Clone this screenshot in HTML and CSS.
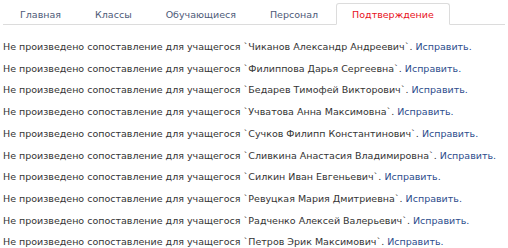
FILE: index.html
```html
<!DOCTYPE html>
<html lang="ru">
<head>
    <meta charset="UTF-8">
    <title>Подтверждение</title>
    <link rel="stylesheet" href="styles.css">
</head>
<body>
    <ul class="tabs">
        <li class="tab"><a href="#">Главная</a></li>
        <li class="tab"><a href="#">Классы</a></li>
        <li class="tab"><a href="#">Обучающиеся</a></li>
        <li class="tab"><a href="#">Персонал</a></li>
        <li class="tab active"><a href="#">Подтверждение</a></li>
    </ul>

    <div class="messages">
        <p class="msg">Не произведено сопоставление для учащегося `Чиканов Александр Андреевич`. <a href="#">Исправить.</a></p>
        <p class="msg">Не произведено сопоставление для учащегося `Филиппова Дарья Сергеевна`. <a href="#">Исправить.</a></p>
        <p class="msg">Не произведено сопоставление для учащегося `Бедарев Тимофей Викторович`. <a href="#">Исправить.</a></p>
        <p class="msg">Не произведено сопоставление для учащегося `Учватова Анна Максимовна`. <a href="#">Исправить.</a></p>
        <p class="msg">Не произведено сопоставление для учащегося `Сучков Филипп Константинович`. <a href="#">Исправить.</a></p>
        <p class="msg">Не произведено сопоставление для учащегося `Сливкина Анастасия Владимировна`. <a href="#">Исправить.</a></p>
        <p class="msg">Не произведено сопоставление для учащегося `Силкин Иван Евгеньевич`. <a href="#">Исправить.</a></p>
        <p class="msg">Не произведено сопоставление для учащегося `Ревуцкая Мария Дмитриевна`. <a href="#">Исправить.</a></p>
        <p class="msg">Не произведено сопоставление для учащегося `Радченко Алексей Валерьевич`. <a href="#">Исправить.</a></p>
        <p class="msg">Не произведено сопоставление для учащегося `Петров Эрик Максимович`. <a href="#">Исправить.</a></p>
    </div>
</body>
</html>
```

FILE: styles.css
```css
* {
    margin: 0;
    padding: 0;
    box-sizing: border-box;
}

body {
    font-family: 'DejaVu Sans', sans-serif;
    font-size: 9.5px;
    color: #333333;
    background: #ffffff;
    padding: 3px 3px 0 3px;
}

.tabs {
    list-style: none;
    display: flex;
    border-bottom: 1px solid #dcdcdc;
    padding-left: 1px;
}

.tab {
    margin-bottom: -1px;
    margin-right: 2px;
}

.tab a {
    display: block;
    padding: 5px 15px 3px 15px;
    line-height: 12px;
    color: #4d5a78;
    text-decoration: none;
    border: 1px solid transparent;
    border-radius: 3px 3px 0 0;
}

.tab.active a {
    color: #e8111c;
    background: #ffffff;
    border-color: #dcdcdc;
    border-bottom-color: #ffffff;
}

.messages {
    padding-top: 11px;
}

.msg {
    line-height: 21.7px;
    white-space: nowrap;
}

.msg a {
    color: #2c4c8c;
    text-decoration: none;
}
```
